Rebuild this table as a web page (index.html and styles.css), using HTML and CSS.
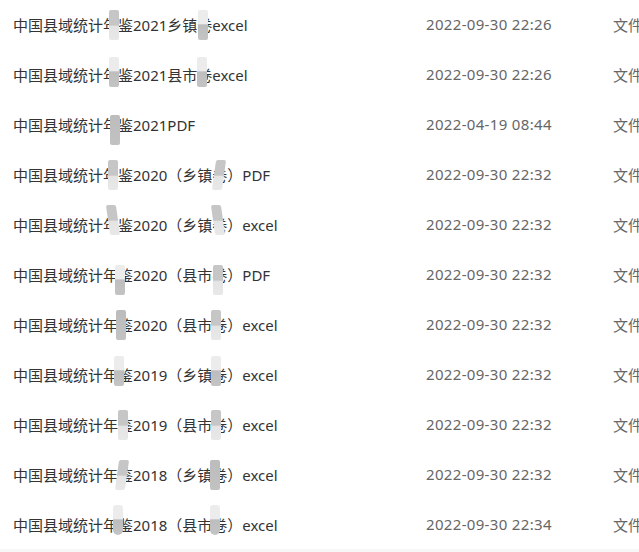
FILE: index.html
```html
<!DOCTYPE html>
<html lang="zh-CN">
<head>
<meta charset="utf-8">
<title>文件列表</title>
<link rel="stylesheet" href="styles.css">
</head>
<body>
<div class="list">
  <div class="row"><span class="name">中国县域统计年鉴2021乡镇卷excel</span><span class="date">2022-09-30 22:26</span><span class="type">文件夹</span>
    <span class="sm g2" style="left:109px;top:11px"></span><span class="sm g1" style="left:198px;top:11px"></span></div>
  <div class="row"><span class="name">中国县域统计年鉴2021县市卷excel</span><span class="date">2022-09-30 22:26</span><span class="type">文件夹</span>
    <span class="sm g1" style="left:109px;top:8px"></span><span class="sm g1" style="left:197px;top:8px"></span></div>
  <div class="row"><span class="name">中国县域统计年鉴2021PDF</span><span class="date">2022-04-19 08:44</span><span class="type">文件夹</span>
    <span class="sm g3" style="left:110px;top:16px"></span></div>
  <div class="row"><span class="name">中国县域统计年鉴2020（乡镇卷）PDF</span><span class="date">2022-09-30 22:32</span><span class="type">文件夹</span>
    <span class="sm g2" style="left:108px;top:11px"></span><span class="sm g2 slant" style="left:214px;top:11px"></span></div>
  <div class="row"><span class="name">中国县域统计年鉴2020（乡镇卷）excel</span><span class="date">2022-09-30 22:32</span><span class="type">文件夹</span>
    <span class="sm g2 slant2" style="left:108px;top:6px"></span><span class="sm g2 slant2" style="left:213px;top:6px"></span></div>
  <div class="row"><span class="name">中国县域统计年鉴2020（县市卷）PDF</span><span class="date">2022-09-30 22:32</span><span class="type">文件夹</span>
    <span class="sm g1" style="left:115px;top:16px"></span><span class="sm g2" style="left:213px;top:16px"></span></div>
  <div class="row"><span class="name">中国县域统计年鉴2020（县市卷）excel</span><span class="date">2022-09-30 22:32</span><span class="type">文件夹</span>
    <span class="sm g3" style="left:116px;top:11px"></span><span class="sm g2" style="left:211px;top:11px"></span></div>
  <div class="row"><span class="name">中国县域统计年鉴2019（乡镇卷）excel</span><span class="date">2022-09-30 22:32</span><span class="type">文件夹</span>
    <span class="sm g1" style="left:114px;top:7px"></span><span class="sm g1" style="left:211px;top:7px"></span></div>
  <div class="row"><span class="name">中国县域统计年鉴2019（县市卷）excel</span><span class="date">2022-09-30 22:32</span><span class="type">文件夹</span>
    <span class="sm g2" style="left:118px;top:11px"></span><span class="sm g2" style="left:211px;top:11px"></span></div>
  <div class="row"><span class="name">中国县域统计年鉴2018（乡镇卷）excel</span><span class="date">2022-09-30 22:32</span><span class="type">文件夹</span>
    <span class="sm g2 slant" style="left:117px;top:11px"></span><span class="sm g3" style="left:210px;top:11px"></span></div>
  <div class="row"><span class="name">中国县域统计年鉴2018（县市卷）excel</span><span class="date">2022-09-30 22:34</span><span class="type">文件夹</span>
    <span class="sm g1 round" style="left:113px;top:6px"></span><span class="sm g1 round" style="left:210px;top:6px"></span></div>
</div>
<div class="footer"></div>
</body>
</html>
```

FILE: styles.css
```css
html, body {
  margin: 0;
  padding: 0;
  background: #ffffff;
  overflow: hidden;
}
body {
  width: 639px;
  height: 552px;
  font-family: "Noto Sans", "Noto Sans CJK SC", sans-serif;
  font-size: 15px;
}
.list {
  margin-top: -1px;
}
.row {
  position: relative;
  height: 50px;
  display: grid;
  grid-template-columns: 413px 187px 1fr;
  align-items: center;
  padding-left: 13px;
  white-space: nowrap;
  overflow: hidden;
}
.name {
  color: #333333;
}
.date {
  color: #666666;
  letter-spacing: 0.33px;
}
.type {
  color: #666666;
  overflow: hidden;
}
.sm {
  position: absolute;
  width: 10px;
  height: 30px;
  border-radius: 2px;
}
.g1 {
  background: linear-gradient(to bottom, #ececec 0%, #ececec 45%, #bdbdbd 50%, #c4c4c4 100%);
}
.g2 {
  background: linear-gradient(to bottom, #c6c6c6 0%, #c6c6c6 50%, #e4e4e4 55%, #e8e8e8 100%);
}
.g3 {
  background: linear-gradient(to bottom, #bcbcbc 0%, #c2c2c2 100%);
}
.slant {
  transform: skewX(-8deg);
}
.slant2 {
  transform: skewX(8deg);
}
.round {
  border-radius: 4px 4px 6px 6px;
}
.footer {
  height: 3px;
  background: #f7f7f8;
}
```
